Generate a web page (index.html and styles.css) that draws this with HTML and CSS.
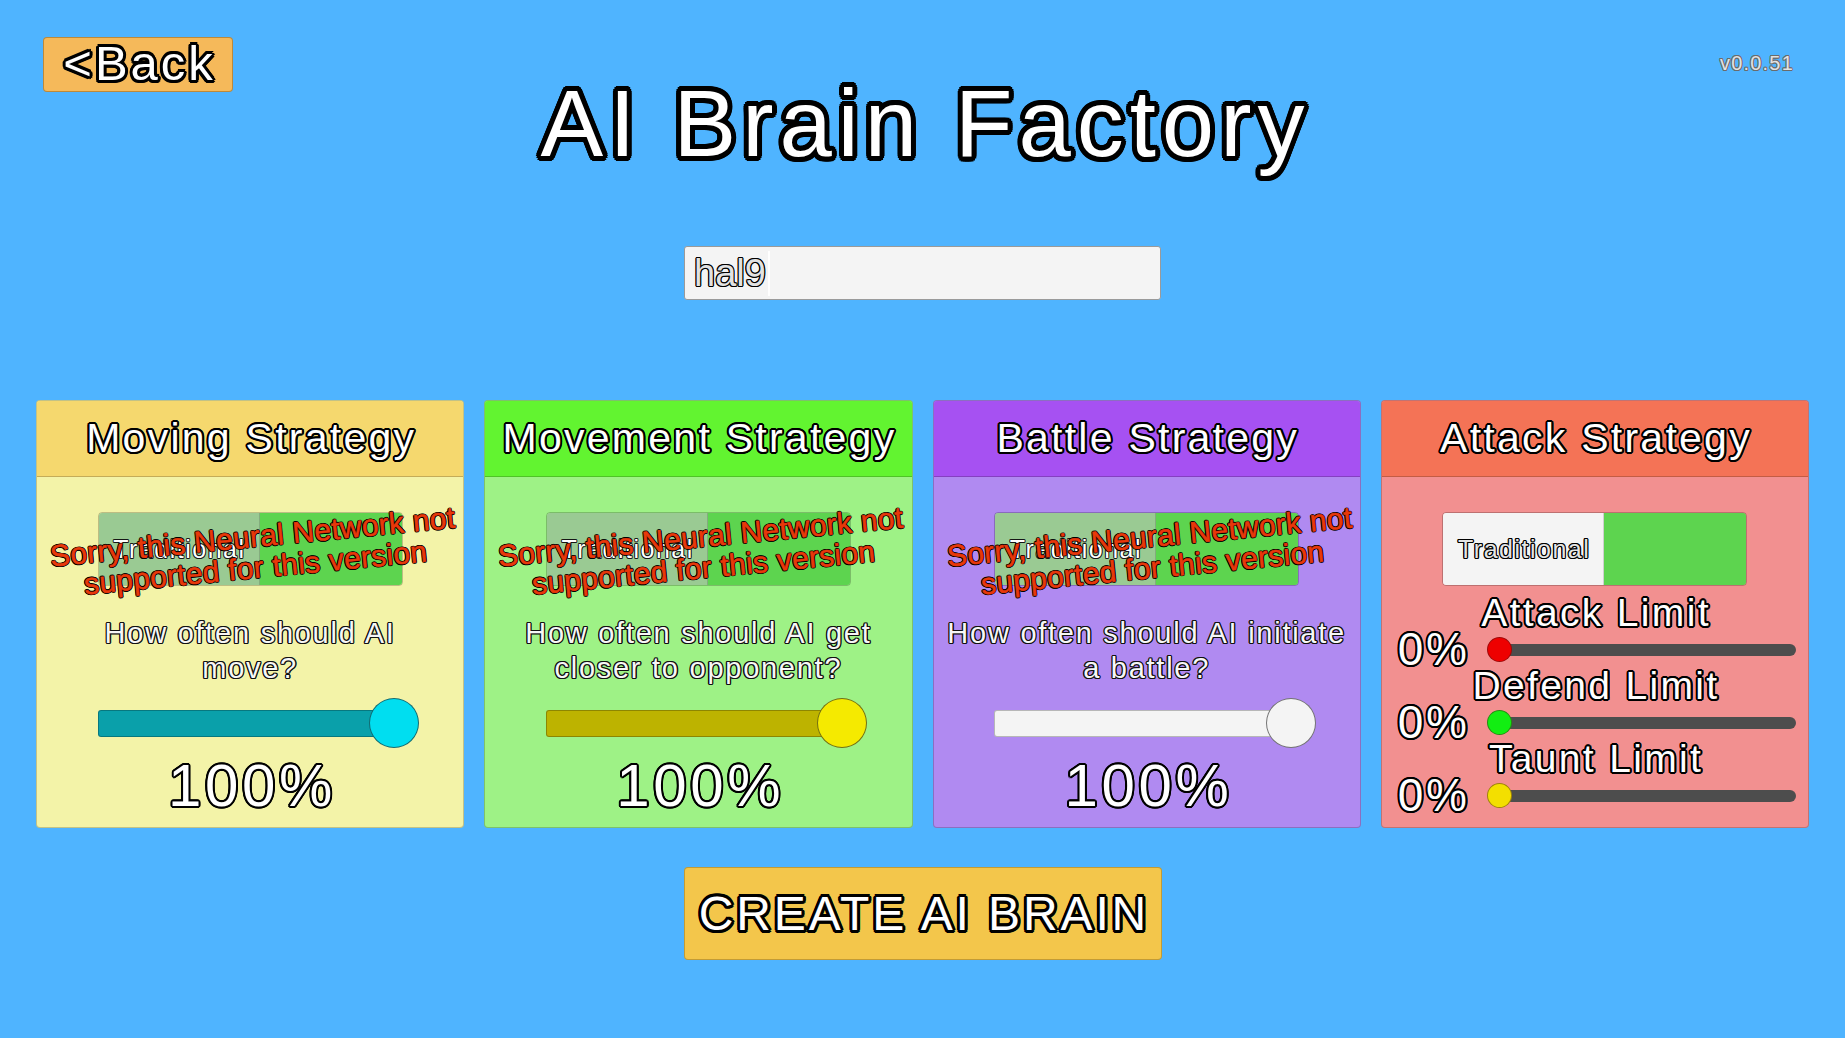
FILE: index.html
```html
<!DOCTYPE html>
<html lang="en">
<head>
<meta charset="utf-8">
<title>AI Brain Factory</title>
<link rel="stylesheet" href="styles.css">
</head>
<body>
<div class="screen">
  <header class="topbar">
    <div class="top-left"><button class="back-btn">&lt;Back</button></div>
    <h1 class="title">AI Brain Factory</h1>
    <div class="top-right"><span class="version">v0.0.51</span></div>
  </header>

  <div class="name-row">
    <div class="name-input"><span class="name-text">hal9</span><span class="caret"></span></div>
  </div>

  <main class="cards">
    <section class="card card-moving">
      <header class="card-head">Moving Strategy</header>
      <div class="card-body">
        <div class="toggle-wrap">
          <div class="toggle is-disabled"><span class="seg seg-left">Traditional</span><span class="seg seg-right"></span></div>
          <p class="unsupported">Sorry, this Neural Network not<br>supported for this version</p>
        </div>
        <p class="question">How often should AI<br>move?</p>
        <div class="slider slider-teal"><div class="slider-track"></div><span class="slider-handle"></span></div>
        <div class="percent">100%</div>
      </div>
    </section>

    <section class="card card-movement">
      <header class="card-head">Movement Strategy</header>
      <div class="card-body">
        <div class="toggle-wrap">
          <div class="toggle is-disabled"><span class="seg seg-left">Traditional</span><span class="seg seg-right"></span></div>
          <p class="unsupported">Sorry, this Neural Network not<br>supported for this version</p>
        </div>
        <p class="question">How often should AI get<br>closer to opponent?</p>
        <div class="slider slider-olive"><div class="slider-track"></div><span class="slider-handle"></span></div>
        <div class="percent">100%</div>
      </div>
    </section>

    <section class="card card-battle">
      <header class="card-head">Battle Strategy</header>
      <div class="card-body">
        <div class="toggle-wrap">
          <div class="toggle is-disabled"><span class="seg seg-left">Traditional</span><span class="seg seg-right"></span></div>
          <p class="unsupported">Sorry, this Neural Network not<br>supported for this version</p>
        </div>
        <p class="question">How often should AI initiate<br>a battle?</p>
        <div class="slider slider-white"><div class="slider-track"></div><span class="slider-handle"></span></div>
        <div class="percent">100%</div>
      </div>
    </section>

    <section class="card card-attack">
      <header class="card-head">Attack Strategy</header>
      <div class="card-body">
        <div class="toggle-wrap">
          <div class="toggle"><span class="seg seg-left">Traditional</span><span class="seg seg-right"></span></div>
        </div>
        <div class="limits">
          <div class="limit">
            <div class="limit-label">Attack Limit</div>
            <div class="limit-line"><span class="pct">0%</span><div class="limit-track"><span class="knob knob-red"></span></div></div>
          </div>
          <div class="limit">
            <div class="limit-label">Defend Limit</div>
            <div class="limit-line"><span class="pct">0%</span><div class="limit-track"><span class="knob knob-green"></span></div></div>
          </div>
          <div class="limit">
            <div class="limit-label">Taunt Limit</div>
            <div class="limit-line"><span class="pct">0%</span><div class="limit-track"><span class="knob knob-yellow"></span></div></div>
          </div>
        </div>
      </div>
    </section>
  </main>

  <div class="create-row">
    <button class="create-btn">CREATE AI BRAIN</button>
  </div>
</div>
</body>
</html>
```

FILE: styles.css
```css
* { box-sizing: border-box; }

html, body {
  margin: 0;
  padding: 0;
}

body {
  background: #4fb4ff;
  font-family: "Liberation Sans", Arial, sans-serif;
  color: #fff;
  width: 1845px;
  height: 1038px;
  overflow: hidden;
}

.screen {
  display: flex;
  flex-direction: column;
  width: 1845px;
  height: 1038px;
}

/* ---------- outlines ---------- */
.title {
  text-shadow:
    5px 0 0 #000, 4.62px 1.91px 0 #000, 3.54px 3.54px 0 #000, 1.91px 4.62px 0 #000,
    0 5px 0 #000, -1.91px 4.62px 0 #000, -3.54px 3.54px 0 #000, -4.62px 1.91px 0 #000,
    -5px 0 0 #000, -4.62px -1.91px 0 #000, -3.54px -3.54px 0 #000, -1.91px -4.62px 0 #000,
    0 -5px 0 #000, 1.91px -4.62px 0 #000, 3.54px -3.54px 0 #000, 4.62px -1.91px 0 #000,
    2.5px 0 0 #000, -2.5px 0 0 #000, 0 2.5px 0 #000, 0 -2.5px 0 #000;
}

.back-btn, .create-btn {
  text-shadow:
    3px 0 0 #000, 2.6px 1.5px 0 #000, 1.5px 2.6px 0 #000, 0 3px 0 #000,
    -1.5px 2.6px 0 #000, -2.6px 1.5px 0 #000, -3px 0 0 #000, -2.6px -1.5px 0 #000,
    -1.5px -2.6px 0 #000, 0 -3px 0 #000, 1.5px -2.6px 0 #000, 2.6px -1.5px 0 #000;
}

.card-head, .percent, .limit-label, .pct {
  text-shadow:
    2px 0 0 #000, 1.41px 1.41px 0 #000, 0 2px 0 #000, -1.41px 1.41px 0 #000,
    -2px 0 0 #000, -1.41px -1.41px 0 #000, 0 -2px 0 #000, 1.41px -1.41px 0 #000,
    1.85px 0.77px 0 #000, 0.77px 1.85px 0 #000, -0.77px 1.85px 0 #000, -1.85px 0.77px 0 #000,
    -1.85px -0.77px 0 #000, -0.77px -1.85px 0 #000, 0.77px -1.85px 0 #000, 1.85px -0.77px 0 #000;
}

.question {
  text-shadow:
    1.3px 0 0 #111, 0.92px 0.92px 0 #111, 0 1.3px 0 #111, -0.92px 0.92px 0 #111,
    -1.3px 0 0 #111, -0.92px -0.92px 0 #111, 0 -1.3px 0 #111, 0.92px -0.92px 0 #111;
}

.unsupported {
  text-shadow:
    1.1px 0 0 #000, 0.78px 0.78px 0 #000, 0 1.1px 0 #000, -0.78px 0.78px 0 #000,
    -1.1px 0 0 #000, -0.78px -0.78px 0 #000, 0 -1.1px 0 #000, 0.78px -0.78px 0 #000;
}

.name-text, .seg-left {
  text-shadow:
    1.2px 0 0 #000, 0.85px 0.85px 0 #000, 0 1.2px 0 #000, -0.85px 0.85px 0 #000,
    -1.2px 0 0 #000, -0.85px -0.85px 0 #000, 0 -1.2px 0 #000, 0.85px -0.85px 0 #000;
}

.version {
  text-shadow:
    1px 0 0 #6b6b6b, 0.7px 0.7px 0 #6b6b6b, 0 1px 0 #6b6b6b, -0.7px 0.7px 0 #6b6b6b,
    -1px 0 0 #6b6b6b, -0.7px -0.7px 0 #6b6b6b, 0 -1px 0 #6b6b6b, 0.7px -0.7px 0 #6b6b6b;
}

/* ---------- top bar ---------- */
.topbar {
  display: grid;
  grid-template-columns: 1fr auto 1fr;
  align-items: start;
  height: 246px;
}

.top-left { display: flex; }
.top-right { display: flex; justify-content: flex-end; }

.back-btn {
  margin: 37px 0 0 43px;
  width: 190px;
  height: 55px;
  padding: 0 0 3px 0;
  background: #f5b95a;
  border: 1px solid rgba(120, 80, 20, 0.45);
  border-radius: 4px;
  color: #fff;
  font-family: inherit;
  font-size: 49px;
  letter-spacing: 0.06em;
  display: flex;
  align-items: center;
  justify-content: center;
  text-indent: 0.06em;
}

.title {
  margin: 77px 0 0 0;
  padding-left: 6px;
  font-size: 94px;
  line-height: 94px;
  font-weight: normal;
  letter-spacing: 6px;
  color: #fff;
  white-space: nowrap;
}

.version {
  margin: 53px 51px 0 0;
  font-size: 20px;
  line-height: 20px;
  letter-spacing: 0.06em;
  color: #e2e2e2;
}

/* ---------- name input ---------- */
.name-row {
  display: flex;
  justify-content: center;
  height: 154px;
}

.name-input {
  width: 477px;
  height: 54px;
  background: #f4f4f4;
  border: 1px solid #9a9a9a;
  border-radius: 3px;
  display: flex;
  align-items: center;
  padding-left: 9px;
}

.name-text {
  font-size: 38px;
  line-height: 52px;
  color: #e2e2e2;
}

.caret {
  display: inline-block;
  width: 2px;
  height: 45px;
  margin-left: 2px;
  background: #ffffff;
}

/* ---------- cards ---------- */
.cards {
  display: grid;
  grid-template-columns: repeat(4, 1fr);
  gap: 20px;
  padding: 0 36px;
  height: 428px;
}

.card {
  display: flex;
  flex-direction: column;
  border: 1px solid rgba(0, 0, 0, 0.2);
  border-radius: 4px;
  overflow: hidden;
}

.card-head {
  height: 76px;
  border-bottom: 1px solid rgba(0, 0, 0, 0.2);
  display: flex;
  align-items: center;
  justify-content: center;
  font-size: 41px;
  line-height: 75px;
  letter-spacing: 0.055em;
  text-indent: 0.055em;
  white-space: nowrap;
}

.card-body {
  flex: 1;
  display: flex;
  flex-direction: column;
  align-items: center;
}

.card-moving { background: #f3f3a8; }
.card-moving .card-head { background: #f5d86e; }
.card-movement { background: #9ef286; }
.card-movement .card-head { background: #62f430; }
.card-battle { background: #b08af1; }
.card-battle .card-head { background: #a651f2; }
.card-attack { background: #f29090; }
.card-attack .card-head { background: #f47356; }

/* toggle */
.toggle-wrap {
  position: relative;
  width: 305px;
  height: 74px;
  margin-top: 35px;
}

.toggle {
  display: flex;
  width: 100%;
  height: 100%;
  border: 1px solid rgba(0, 0, 0, 0.22);
  border-radius: 4px;
  overflow: hidden;
}

.seg-left {
  width: 161px;
  display: flex;
  align-items: center;
  justify-content: center;
  background: #f4f4f4;
  border-right: 1px solid rgba(0, 0, 0, 0.15);
  font-size: 25px;
  letter-spacing: 0.06em;
  text-indent: 0.06em;
  color: #e4e4e4;
}

.seg-right {
  flex: 1;
  background: #5dd44f;
}

.toggle.is-disabled .seg-left {
  background: #9aca93;
  color: #ffffff;
  text-shadow:
    1px 0 0 rgba(20,20,20,0.8), 0.7px 0.7px 0 rgba(20,20,20,0.8), 0 1px 0 rgba(20,20,20,0.8), -0.7px 0.7px 0 rgba(20,20,20,0.8),
    -1px 0 0 rgba(20,20,20,0.8), -0.7px -0.7px 0 rgba(20,20,20,0.8), 0 -1px 0 rgba(20,20,20,0.8), 0.7px -0.7px 0 rgba(20,20,20,0.8);
}

.unsupported {
  position: absolute;
  left: 50%;
  top: 50%;
  margin: 0;
  transform: translate(calc(-50% + 4px), calc(-50% + 3px)) rotate(-5.5deg);
  white-space: nowrap;
  text-align: center;
  font-size: 30px;
  line-height: 31px;
  font-weight: normal;
  letter-spacing: 0.01em;
  color: #e8380a;
  -webkit-text-stroke: 0.6px #e8380a;
}

/* question */
.question {
  margin: 29.5px 0 0 0;
  font-size: 29px;
  line-height: 35px;
  letter-spacing: 0.06em;
  text-align: center;
  color: #f7f7f7;
  white-space: nowrap;
}

/* slider */
.slider {
  position: relative;
  width: 305px;
  height: 50px;
  margin-top: 12.5px;
}

.slider-track {
  width: 298px;
  height: 27px;
  margin-top: 11.5px;
  border: 1px solid rgba(0, 0, 0, 0.25);
  border-radius: 3px;
}

.slider-handle {
  position: absolute;
  left: 271.5px;
  top: 0;
  width: 50px;
  height: 50px;
  border-radius: 50%;
  border: 1px solid rgba(30, 30, 30, 0.6);
}

.slider-teal .slider-track { background: #0aa0aa; }
.slider-teal .slider-handle { background: #00def0; }
.slider-olive .slider-track { background: #bdb300; }
.slider-olive .slider-handle { background: #f5ea00; }
.slider-white .slider-track { background: #f4f4f4; }
.slider-white .slider-handle { background: #f4f4f4; }

.percent {
  margin-top: 8px;
  font-size: 60px;
  line-height: 60px;
  letter-spacing: 0.06em;
  text-indent: 0.06em;
}

/* attack limits */
.limits {
  width: 100%;
  margin-top: 9px;
  display: flex;
  flex-direction: column;
}

.limit-label {
  text-align: center;
  font-size: 39px;
  line-height: 36px;
  letter-spacing: 0.06em;
  text-indent: 0.06em;
  white-space: nowrap;
}

.limit-line {
  display: flex;
  align-items: center;
  height: 37px;
  padding: 0 12px 0 16px;
}

.pct {
  width: 90px;
  flex: none;
  font-size: 46px;
  line-height: 37px;
  letter-spacing: 0.06em;
}

.limit-track {
  position: relative;
  flex: 1;
  height: 12px;
  border-radius: 6px;
  background: #4d4d4d;
}

.knob {
  position: absolute;
  left: -0.5px;
  top: -6.5px;
  width: 25px;
  height: 25px;
  border-radius: 50%;
  border: 1px solid rgba(60, 20, 20, 0.45);
}

.knob-red { background: #ee0000; }
.knob-green { background: #12ee12; }
.knob-yellow { background: #f3df00; }

/* create button */
.create-row {
  display: flex;
  justify-content: center;
  margin-top: 39px;
}

.create-btn {
  width: 478px;
  height: 93px;
  background: #f3c64b;
  border: 1px solid rgba(120, 90, 20, 0.4);
  border-radius: 4px;
  color: #fff;
  font-family: inherit;
  font-size: 48px;
  letter-spacing: 0.06em;
  text-indent: 0.06em;
  display: flex;
  align-items: center;
  justify-content: center;
  padding: 0;
  white-space: nowrap;
}
```
